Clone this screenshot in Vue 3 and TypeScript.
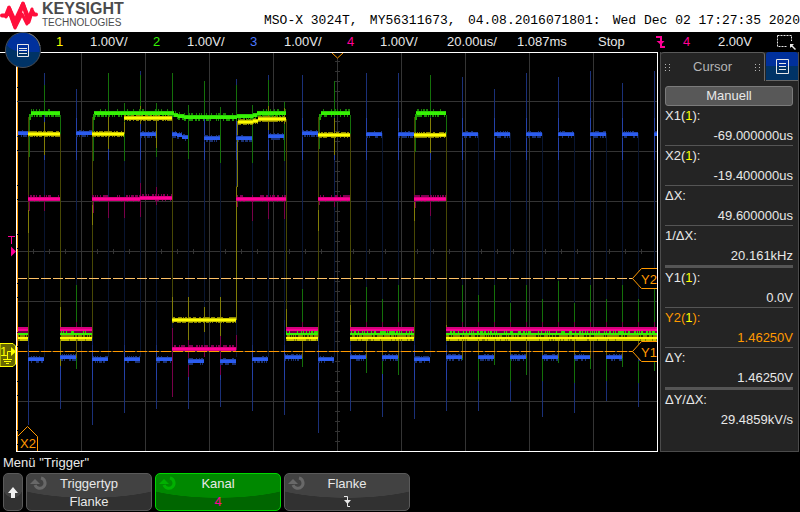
<script setup lang="ts">
interface Box { x: number; y: number; w: number; h: number; c: string }
interface Segment { from: number; to: number; y: number }
interface Measurement { name: string; source?: string; value: string; active?: boolean; groupEnd?: boolean }

const titleFields: string[] = ['MSO-X 3024T,', 'MY56311673,', '04.08.2016071801:', 'Wed Dec 02 17:27:35 2020']

const channels = [
  { id: '1', scale: '1.00V/', tone: 'yellow' },
  { id: '2', scale: '1.00V/', tone: 'green' },
  { id: '3', scale: '1.00V/', tone: 'blue' },
  { id: '4', scale: '1.00V/', tone: 'pink' },
]

const measurements: Measurement[] = [
  { name: 'X1', source: '1', value: '-69.000000us' },
  { name: 'X2', source: '1', value: '-19.400000us' },
  { name: 'ΔX', value: '49.600000us' },
  { name: '1/ΔX', value: '20.161kHz', groupEnd: true },
  { name: 'Y1', source: '1', value: '0.0V' },
  { name: 'Y2', source: '1', value: '1.46250V', active: true },
  { name: 'ΔY', value: '1.46250V', groupEnd: true },
  { name: 'ΔY/ΔX', value: '29.4859kV/s' },
]

// Graticule
const gridX = [81, 145, 209, 273, 337, 401, 465, 529, 593]
const gridY = [101, 151, 201, 251, 301, 351, 401]
const ticksY = Array.from({ length: 39 }, (_, i) => 61 + i * 10)
const ticksX = Array.from({ length: 39 }, (_, i) => 33 + i * 16)

function noise(n: number): number {
  const s = Math.sin(n * 12.9898) * 43758.5453
  return s - Math.floor(s)
}

// Ragged one-pixel bursts along one side of a trace
function fringe(seg: Segment, dy: number, h: number, c: string, density: number): Box[] {
  const out: Box[] = []
  for (let x = seg.from; x < seg.to; x++) {
    if (noise(x * 3 + dy * 17) < density) out.push({ x, y: seg.y + dy, w: 1, h, c })
  }
  return out
}

const seg = (from: number, to: number, y: number): Segment => ({ from, to, y })

// Channel 3: clock
const blueSegments: Segment[] = [
  seg(17, 28, 132), seg(76, 92, 132), seg(140, 156, 133), seg(172, 177, 133), seg(177, 182, 134), seg(182, 188, 136),
  seg(204, 220, 137), seg(236, 252, 137), seg(268, 284, 135), seg(302, 318, 132),
  seg(366, 382, 133), seg(398, 414, 133),
  ...[462, 494, 526, 558, 590, 622].map(x => seg(x, x + 16, 133)), seg(654, 657, 133),
  seg(28, 44, 358), seg(60, 76, 356), seg(92, 108, 358), seg(124, 140, 358), seg(156, 172, 358),
  seg(188, 204, 360), seg(220, 236, 360), seg(252, 268, 358), seg(285, 302, 356), seg(318, 334, 358),
  seg(350, 366, 356), seg(382, 398, 356), seg(414, 430, 358),
  ...[446, 478, 510, 542, 574, 606].map(x => seg(x, x + 16, 356)), seg(638, 645, 356),
]
const rising: [number, number][] = [
  [44, 73], [76, 89], [108, 100], [140, 71], [172, 100], [204, 100], [236, 79], [268, 75], [302, 75], [334, 110],
  [366, 73], [398, 73], [430, 110], [462, 77], [494, 89], [526, 73], [558, 77], [590, 71], [622, 83], [654, 71],
]
const falling: [number, number][] = [
  [28, 425], [60, 409], [92, 425], [124, 413], [156, 409], [188, 409], [220, 407], [252, 411], [284, 415],
  [318, 433], [350, 411], [382, 417], [414, 419], [446, 411], [478, 411], [510, 402], [542, 417], [574, 413],
  [606, 401], [638, 407],
]
const blueEdges: Box[] = [
  ...rising.flatMap(([x, top]) => [
    { x, y: top, w: 1, h: 357 - top, c: '#091530' },
    { x, y: 160, w: 1, h: 50, c: '#10204f' },
    { x, y: top, w: 1, h: 132 - top, c: '#1a3078' },
    { x, y: 118, w: 1, h: 42, c: '#2441a8' },
  ]),
  ...falling.flatMap(([x, bottom]) => [
    { x, y: 133, w: 1, h: bottom - 133, c: '#091530' },
    { x, y: 320, w: 1, h: 30, c: '#12245c' },
    { x, y: 345, w: 1, h: bottom - 345, c: '#1a3078' },
    { x, y: 350, w: 1, h: 30, c: '#2441a8' },
  ]),
]
const blueTrace: Box[] = blueSegments.flatMap(s => [
  ...fringe(s, -2, 2, '#1a3070', 0.4),
  ...fringe(s, 3, 2, '#1a3070', 0.5),
  { x: s.from, y: s.y - 1, w: s.to - s.from, h: 4, c: '#2449b8' },
  { x: s.from, y: s.y, w: s.to - s.from, h: 3, c: '#2b5cf0' },
])

// Spikes that cross-couple between the channels: [x, top, bottom]
const greenSpikes: [number, number, number][] = [
  [44, 85, 112], [108, 73, 112], [124, 103, 161], [140, 75, 112], [156, 103, 157], [172, 73, 116],
  [188, 105, 159], [204, 81, 116], [220, 107, 163], [236, 85, 116], [252, 105, 163], [268, 80, 112],
  [284, 102, 161], [334, 81, 112], [430, 75, 112], [29, 117, 157], [93, 117, 161], [319, 117, 149], [415, 117, 152],
  [60, 115, 134], [350, 115, 134], [446, 115, 134],
  [76, 285, 369], [302, 289, 367], [366, 287, 373], [382, 299, 374], [398, 285, 375], [462, 285, 360],
  [478, 295, 381], [494, 285, 365], [510, 303, 381], [526, 285, 375], [542, 299, 381], [558, 281, 363],
  [574, 303, 383], [590, 285, 369], [606, 299, 381], [622, 285, 367], [638, 299, 383], [654, 289, 371],
]
const yellowSpikes: [number, number, number][] = [
  [28, 210, 233], [44, 122, 155], [92, 205, 225], [108, 114, 149], [124, 122, 134], [140, 106, 124],
  [156, 118, 148], [188, 297, 340], [204, 307, 332], [220, 297, 340], [172, 297, 320], [236, 187, 320],
  [237, 121, 187], [268, 106, 130], [284, 108, 124], [286, 309, 338], [318, 210, 231], [334, 118, 155],
  [350, 305, 338], [414, 200, 221], [430, 118, 153], [60, 307, 366], [446, 325, 338],
]
const lowRippleX = [76, 302, 366, 382, 398, 462, 478, 494, 510, 526, 542, 558, 574, 590, 606, 622, 638, 654]
const pinkSpikes: [number, number, number][] = [
  [29, 200, 211], [44, 200, 211], [93, 200, 213], [108, 200, 218], [124, 200, 218], [140, 183, 217],
  [156, 187, 205], [237, 200, 207], [252, 200, 221], [268, 200, 219], [284, 200, 219], [334, 200, 207],
  [319, 200, 205], [415, 200, 208], [430, 200, 216], [172, 328, 397], [188, 340, 377], [220, 336, 375],
  [236, 335, 350], [204, 345, 357],
]
const yellowEdges: Box[] = [
  [28, 117, 338], [60, 134, 338], [92, 117, 338], [172, 118, 320], [236, 186, 320],
  [286, 119, 338], [318, 117, 338], [350, 134, 338], [414, 117, 338], [446, 134, 338],
].map(([x, top, bottom]) => ({ x, y: top, w: 1, h: bottom - top, c: '#484804' }))
const spikes: Box[] = [
  ...greenSpikes.map(([x, top, bottom]) => ({ x, y: top, w: 1, h: bottom - top, c: '#14700a' })),
  ...yellowSpikes.map(([x, top, bottom]) => ({ x, y: top, w: 1, h: bottom - top, c: '#817d06' })),
  ...pinkSpikes.map(([x, top, bottom]) => ({ x, y: top, w: 1, h: bottom - top, c: '#78004a' })),
  ...lowRippleX.flatMap(x => [
    { x, y: 322, w: 1, h: 6, c: '#700040' },
    { x, y: 341, w: 1, h: 17, c: '#675f06' },
  ]),
]

// Channels 1, 2 and 4 levels
const pinkHigh = [
  seg(28, 60, 197), seg(92, 140, 197), seg(140, 172, 196), seg(236, 286, 197), seg(318, 350, 197),
  seg(414, 446, 197), seg(172, 236, 347),
]
const greenHigh = [
  seg(31, 60, 111), seg(94, 174, 111), seg(174, 178, 113), seg(178, 184, 114), seg(184, 237, 115),
  seg(237, 253, 114), seg(253, 257, 113), seg(257, 286, 111), seg(321, 350, 111), seg(416, 446, 111),
]
const yellowHigh = [
  seg(28, 60, 132), seg(92, 124, 132), seg(124, 172, 116), seg(172, 236, 318), seg(238, 253, 120),
  seg(253, 258, 119), seg(258, 286, 117), seg(318, 350, 133), seg(414, 446, 133),
]
const low = [seg(17, 28, 327), seg(60, 92, 327), seg(286, 318, 327), seg(350, 414, 327), seg(446, 657, 327)]

const levels: Box[] = [
  ...pinkHigh.flatMap(s => [
    ...fringe(s, -2, 2, '#800050', 0.5),
    { x: s.from, y: s.y, w: s.to - s.from, h: 4, c: '#d8007e' },
    { x: s.from, y: s.y + 1, w: s.to - s.from, h: 2, c: '#ff0096' },
    ...fringe(s, 4, 1, '#800050', 0.15),
  ]),
  ...greenHigh.flatMap(s => [
    ...fringe(s, -2, 2, '#177c05', 0.3),
    { x: s.from, y: s.y, w: s.to - s.from, h: 4, c: '#2bd206' },
    { x: s.from, y: s.y + 1, w: s.to - s.from, h: 3, c: '#36f304' },
    ...fringe(s, 4, 2, '#1c9005', 0.55),
  ]),
  ...[29, 93, 319, 415].map(x => ({ x, y: 114, w: 2, h: 6, c: '#1fa005' })),
  ...yellowHigh.flatMap(s => [
    ...fringe(s, -1, 1, '#8a8500', 0.6),
    { x: s.from, y: s.y, w: s.to - s.from, h: 4, c: '#c9c400' },
    { x: s.from, y: s.y + 1, w: s.to - s.from, h: 2, c: '#ffff00' },
    ...fringe(s, 4, 1, '#8a8500', 0.7),
  ]),
  ...low.flatMap(s => {
    const w = s.to - s.from
    return [
      { x: s.from, y: 327, w, h: 4, c: '#ff0096' },
      { x: s.from, y: 327, w, h: 2, c: '#d4007c' },
      { x: s.from, y: 331, w, h: 2, c: '#6e0045' },
      ...fringe(s, 4, 2, '#2fd805', 0.4),
      { x: s.from, y: 333, w, h: 2, c: '#36f304' },
      { x: s.from, y: 335, w, h: 2, c: '#8a8004' },
      ...fringe(s, 8, 2, '#2a2b02', 0.3),
      { x: s.from, y: 337, w, h: 2, c: '#ffff00' },
      { x: s.from, y: 339, w, h: 2, c: '#c4be00' },
      ...fringe(s, 12, 2, '#817c00', 0.2),
    ]
  }),
]

const layers: Box[] = [...blueEdges, ...yellowEdges, ...spikes, ...blueTrace, ...levels]
</script>

<template>
  <div class="scope">
    <header class="brand">
      <div class="logo">
        <svg class="wave" viewBox="0 0 38 30" aria-hidden="true">
          <path d="M2 15.500H6L9 8L15 26L23 4L28.500 22L32 11L34 14.500H36" />
          <path class="thin" d="M9 7L15 20L23 3L29 18L32 9M6 17L9 12L15 28L22 14L27 24" />
        </svg>
        <div class="wordmark">
          <strong>KEYSIGHT</strong>
          <span>TECHNOLOGIES</span>
        </div>
      </div>
      <div class="title">
        <span v-for="field in titleFields" :key="field">{{ field }}</span>
      </div>
    </header>

    <section class="status">
      <template v-for="ch in channels" :key="ch.id">
        <span :class="ch.tone">{{ ch.id }}</span>
        <span>{{ ch.scale }}</span>
      </template>
      <span>20.00us/</span>
      <span>1.087ms</span>
      <span>Stop</span>
      <svg class="edge pink" viewBox="0 0 9 12" aria-hidden="true">
        <path d="M0 1h5v10h4" />
        <path class="solid" d="M0.500 5h8L5 9z" />
      </svg>
      <span class="pink">4</span>
      <span>2.00V</span>
      <svg class="marquee" viewBox="0 0 19 15" aria-hidden="true">
        <rect x="0.500" y="0.500" width="14" height="11" />
        <path class="halo" d="M12 8h5M12 8v5" />
        <path class="pointer" d="M13 9h4l-1.500 1.500L19 14l-1 1l-3.500-3.500L13 13z" />
      </svg>
      <button class="menu-button" type="button" aria-label="Menu">
        <svg viewBox="0 0 36 36" aria-hidden="true">
          <circle cx="18" cy="18" r="17.500" fill="#003366" stroke="#4a4e55" />
          <path d="M1.500 17.500A16.500 16.500 0 0 1 34.500 17.500V20H17Q7 19 1.500 13z" fill="#00309c" />
          <path d="M24 1.500A17.500 17.500 0 0 1 35 14" fill="none" stroke="#777" />
          <path class="list" d="M12.500 12.500h11v12h-11zM14 16.500h8M14 18.500h8M14 21.500h8" />
        </svg>
      </button>
    </section>

    <main class="work">
      <svg class="plot" viewBox="0 52 658 400" role="img" aria-label="Waveforms">
        <g class="grid" shape-rendering="crispEdges">
          <rect v-for="x in gridX" :key="'x' + x" :x="x" y="53" width="1" height="398" />
          <rect v-for="y in gridY" :key="'y' + y" x="17" :y="y" width="640" height="1" />
          <rect v-for="y in ticksY" :key="'ty' + y" x="335" :y="y" width="5" height="1" />
          <rect v-for="x in ticksX" :key="'tx' + x" :x="x" y="249" width="1" height="5" />
        </g>
        <g shape-rendering="crispEdges">
          <rect v-for="(b, i) in layers" :key="i" :x="b.x" :y="b.y" :width="b.w" :height="b.h" :fill="b.c" />
        </g>
        <g shape-rendering="crispEdges">
          <path class="dash light" d="M17 278.500H633" />
          <path class="underline" d="M17 351.500H633" />
          <path class="dash" d="M17 351.500H633" />
          <path class="frame" d="M0 52.500H658M16.500 53V451.500H657.500V53" />
          <path class="x-cursor" d="M17.500 53V451" />
        </g>
        <path class="flag" d="M657 268.500H641.500L632.500 278.500L641.500 288.500H657" />
        <path class="flag" d="M657 341.500H641.500L632.500 351.500L641.500 361.500H657" />
        <path class="flag" d="M17.500 436.500L27.500 426.500L37.500 436.500V451" />
        <path class="flag" d="M332 53L337.500 58L343 53" />
        <text class="flag-text" x="641" y="284">Y2</text>
        <text class="flag-text" x="641" y="357">Y1</text>
        <text class="flag-text" x="20" y="448">X2</text>
        <path d="M8 236.500h7M11.500 236v8" stroke="#ff0096" />
        <path d="M11 246.500L16 251.500L11 256.500Z" fill="#ff0096" />
        <path d="M0 343.500H13L15.500 346V364L13 366.500H0Z" fill="#666600" stroke="#ffff00" />
        <text class="channel-mark" x="0" y="356">1</text>
        <path d="M7.500 359V351.500H12M3 359.500H12M4 361.500H11M6 363.500H9" fill="none" stroke="#ffff00" />
        <path d="M11 347L16 351.500L11 356Z" fill="#ffff00" />
      </svg>

      <aside class="panel">
        <div class="tabs">
          <button class="tab" type="button">
            <span class="grip"></span>
            <span>Cursor</span>
            <span class="grip"></span>
          </button>
          <button class="panel-menu" type="button" aria-label="Panel menu">
            <svg viewBox="0 0 15 15" aria-hidden="true">
              <path class="list" d="M1.500 0.500h12v14h-12zM4 4.500h7M4 7.500h7M4 10.500h7" />
            </svg>
          </button>
        </div>
        <button class="mode" type="button">Manuell</button>
        <dl class="readings">
          <div v-for="m in measurements" :key="m.name" :class="['reading', { active: m.active, 'group-end': m.groupEnd }]">
            <dt>{{ m.name }}<template v-if="m.source">(<span class="yellow">{{ m.source }}</span>)</template>:</dt>
            <dd>{{ m.value }}</dd>
          </div>
        </dl>
      </aside>
    </main>

    <footer class="menu">
      <div class="menu-title">Menü "Trigger"</div>
      <nav class="softkeys">
        <button class="key" type="button" aria-label="Back">
          <svg class="up" viewBox="0 0 10 11" aria-hidden="true"><path d="M5 0L10 6H7V11H3V6H0Z" /></svg>
        </button>
        <button class="key" type="button">
          <svg class="knob" viewBox="0 0 18 16" aria-hidden="true"><path class="arc" d="M11 3A5.200 5.200 0 1 1 5 10" /><path d="M0 9L5 4L10 9Z" /></svg>
          <span>Triggertyp</span><span>Flanke</span>
        </button>
        <button class="key selected" type="button">
          <svg class="knob" viewBox="0 0 18 16" aria-hidden="true"><path class="arc" d="M11 3A5.200 5.200 0 1 1 5 10" /><path d="M0 9L5 4L10 9Z" /></svg>
          <span>Kanal</span><span class="pink">4</span>
        </button>
        <button class="key" type="button">
          <svg class="knob" viewBox="0 0 18 16" aria-hidden="true"><path class="arc" d="M11 3A5.200 5.200 0 1 1 5 10" /><path d="M0 9L5 4L10 9Z" /></svg>
          <span>Flanke</span>
          <svg class="edge small" viewBox="0 0 9 12" aria-hidden="true">
            <path d="M1 0.500h3.500v10H7" />
            <path class="solid" d="M1 4h7L4.500 8z" />
          </svg>
        </button>
      </nav>
    </footer>
  </div>
</template>

<style>
body {
  margin: 0;
  background: #000;
}
</style>

<style scoped>
.scope {
  background: #000;
  color: #e8e8e8;
  font: 13px/20px "Liberation Sans", Arial, sans-serif;
}
button {
  margin: 0;
  padding: 0;
  font: inherit;
  color: inherit;
  box-sizing: border-box;
}
.brand {
  display: flex;
  height: 32px;
  background: #fff;
  color: #000;
}
.logo {
  flex: 33 1 0;
  display: flex;
  gap: 4px;
}
.wave {
  width: 38px;
  height: 30px;
  fill: none;
  stroke: #ff0f3c;
  stroke-width: 4;
  stroke-linejoin: round;
  stroke-linecap: round;
}
.wave .thin {
  stroke-width: 3;
}
.wordmark {
  display: flex;
  flex-direction: column;
  color: #4b4b4d;
}
.wordmark strong {
  font-size: 16px;
  line-height: 18px;
}
.wordmark span {
  font-size: 10px;
  line-height: 10px;
}
.title {
  flex: 67 1 0;
  display: flex;
  justify-content: space-between;
  align-items: center;
  padding-top: 10px;
  font-family: "Liberation Mono", monospace;
  white-space: nowrap;
}
.status {
  position: relative;
  display: grid;
  grid-template-columns: 34fr 63fr 34fr 63fr 34fr 63fr 33fr 67fr 70fr 81fr 58fr 27fr 35fr 59fr 23fr;
  padding-left: 56px;
  height: 20px;
  align-items: center;
  white-space: nowrap;
}
.status > * {
  min-width: 0;
}
.yellow { color: #ffff00; }
.green { color: #36f304; }
.blue { color: #4a78ff; }
.pink { color: #ff0096; }
.edge {
  width: 9px;
  height: 12px;
  fill: none;
  stroke: currentColor;
  stroke-width: 2;
}
.edge .solid {
  fill: currentColor;
  stroke: none;
}
.edge.small {
  stroke-width: 1;
  margin-top: 3px;
}
.marquee {
  width: 19px;
  height: 15px;
  fill: none;
  stroke: #e8e8e8;
}
.marquee rect {
  stroke-dasharray: 2 1;
}
.marquee .halo {
  stroke: #000;
  stroke-width: 4;
}
.marquee .pointer {
  fill: #e8e8e8;
  stroke: none;
}
.menu-button {
  position: absolute;
  left: 5px;
  top: 0;
  z-index: 1;
  width: 36px;
  height: 36px;
  border: 0;
  background: none;
}
.menu-button svg {
  display: block;
  width: 100%;
}
.list {
  fill: none;
  stroke: #e8e8e8;
}
.work {
  display: grid;
  grid-template-columns: 658fr 142fr;
}
.plot {
  display: block;
  width: 100%;
  min-width: 0;
}
.grid {
  fill: #343434;
}
.frame {
  fill: none;
  stroke: #fff;
}
.x-cursor {
  stroke: #ff9900;
  stroke-dasharray: 34 1 13 1;
}
.dash {
  stroke: #ff9900;
  stroke-dasharray: 10 2;
}
.dash.light {
  stroke: #ffc266;
}
.underline {
  stroke: #504020;
}
.flag {
  fill: #000;
  stroke: #ff9900;
}
.flag-text {
  fill: #ff9900;
  font-size: 13px;
}
.channel-mark {
  fill: #ffff00;
  font-size: 13px;
}
.panel {
  min-width: 0;
  box-sizing: border-box;
  margin: 0 1px 0 2px;
  border: 1px solid #4b4b4b;
  border-top: 0;
  background: #242424;
}
.tabs {
  display: grid;
  grid-template-columns: 105fr 33fr;
  height: 29px;
}
.tab {
  display: flex;
  justify-content: space-between;
  align-items: center;
  padding: 0 4px;
  border: 0;
  border-top: 1px solid #5a5a5a;
  border-right: 1px solid #6a6a6a;
  border-radius: 3px 3px 0 0;
  background: #242424;
  color: #b5b5b5;
}
.grip {
  width: 5px;
  height: 7px;
  background: repeating-linear-gradient(#242424 0 0, transparent 0 1px, #242424 1px 3px),
    repeating-linear-gradient(90deg, #b5b5b5 0 1px, #242424 1px 4px);
}
.panel-menu {
  margin-left: 1px;
  border: 0;
  border-bottom: 1px solid #666;
  border-radius: 3px 3px 0 0;
  background: linear-gradient(#00309c 50%, #003366 50%);
}
.panel-menu svg {
  display: block;
  width: 15px;
  height: 15px;
  margin: 0 auto;
}
.mode {
  display: block;
  width: calc(100% - 9px);
  height: 20px;
  margin: 5px 5px 0 4px;
  border: 1px solid #7b7b7b;
  border-radius: 3px;
  background: #585858;
  line-height: 18px;
}
.readings {
  margin: 0 5px 0 4px;
}
.reading {
  border-bottom: 1px solid #555;
}
.reading.group-end {
  border-bottom-width: 3px;
}
.reading:last-child {
  border-bottom: 0;
}
.reading dt {
  line-height: 20px;
}
.reading dd {
  margin: 0;
  line-height: 19px;
  text-align: right;
}
.reading.active {
  color: #ff9900;
}
.menu-title {
  padding: 0 3px;
  line-height: 21px;
}
.softkeys {
  display: grid;
  grid-template-columns: 20px repeat(6, minmax(0, 1fr));
  gap: 3px;
  padding: 0 3px 1px;
}
.key {
  position: relative;
  display: flex;
  flex-direction: column;
  align-items: center;
  height: 38px;
  padding-top: 1px;
  border: 1px solid #5a5a5a;
  border-radius: 5px;
  background: radial-gradient(ellipse 75% 24px at 50% 0, #424242 98%, #313131 100%);
  line-height: 18px;
}
.key.selected {
  border-color: #00d800;
  background: radial-gradient(ellipse 75% 24px at 50% 0, #008800 98%, #006600 100%);
}
.up {
  width: 10px;
  height: 11px;
  margin: auto;
  fill: #f0f0f0;
}
.knob {
  position: absolute;
  left: 3px;
  top: 1px;
  width: 18px;
  height: 16px;
  fill: #686868;
}
.knob .arc {
  fill: none;
  stroke: #686868;
  stroke-width: 3;
}
.selected .knob {
  fill: #00b000;
}
.selected .knob .arc {
  stroke: #00b000;
}
</style>
